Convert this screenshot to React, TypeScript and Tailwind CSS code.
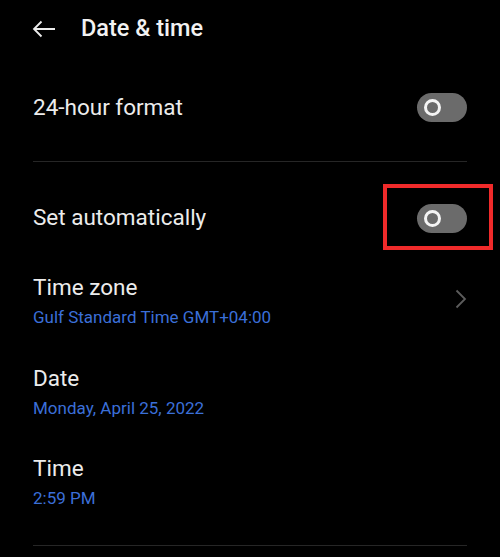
function Toggle() {
  return (
    <div className="flex h-[29px] w-[50px] items-center rounded-full bg-[#6b6b6b] pl-[7px]">
      <div className="h-[17px] w-[17px] rounded-full border-[3.5px] border-[#f4f4f4]" />
    </div>
  );
}

function SwitchRow({ label, className }: { label: string; className?: string }) {
  return (
    <div className={`flex items-center justify-between pl-[33px] pr-[33px] ${className ?? ""}`}>
      <span className="text-[22.5px] text-[#ececec]">{label}</span>
      <Toggle />
    </div>
  );
}

function DetailRow({
  title,
  value,
  chevron,
  className,
}: {
  title: string;
  value: string;
  chevron?: boolean;
  className?: string;
}) {
  return (
    <div className={`flex items-center justify-between pl-[33px] pr-[33px] ${className ?? ""}`}>
      <div className="flex flex-col">
        <span className="h-[30px] text-[22.5px] leading-[30px] text-[#ececec]">{title}</span>
        <span className="mt-[3px] h-[24px] text-[17px] leading-[24px] text-[#3b6fd8]">{value}</span>
      </div>
      {chevron && (
        <svg width="12" height="20" viewBox="0 0 12 20" fill="none" className="mb-[4px]">
          <path d="M1.5 1.5 L10 10 L1.5 18.5" stroke="#5c5c5c" strokeWidth="1.8" />
        </svg>
      )}
    </div>
  );
}

export default function App() {
  return (
    <div className="h-[557px] w-[500px] overflow-hidden bg-black font-['Roboto',sans-serif]">
      <header className="flex h-[57px] items-center pl-[32px] pt-[1px]">
        <svg width="24" height="18" viewBox="0 0 24 18" fill="none">
          <path d="M23 9 H2 M9.5 1.5 L2 9 L9.5 16.5" stroke="#ececec" strokeWidth="1.8" />
        </svg>
        <h1 className="ml-[25px] text-[23.5px] font-medium text-[#f2f2f2]">Date &amp; time</h1>
      </header>

      <SwitchRow label="24-hour format" className="h-[101px]" />
      <div className="mx-[33px] mt-[3px] h-px bg-[#262626]" />

      <div className="relative">
        <SwitchRow label="Set automatically" className="h-[112px]" />
        <div className="absolute left-[383px] top-[22px] h-[66px] w-[110px] border-[4px] border-[#f02a2a]" />
      </div>

      <DetailRow title="Time zone" value="Gulf Standard Time GMT+04:00" chevron className="-mt-[2px]" />
      <DetailRow title="Date" value="Monday, April 25, 2022" className="mt-[34px]" />
      <DetailRow title="Time" value="2:59 PM" className="mt-[33px]" />

      <div className="mx-[33px] mt-[35px] h-px bg-[#262626]" />
    </div>
  );
}
